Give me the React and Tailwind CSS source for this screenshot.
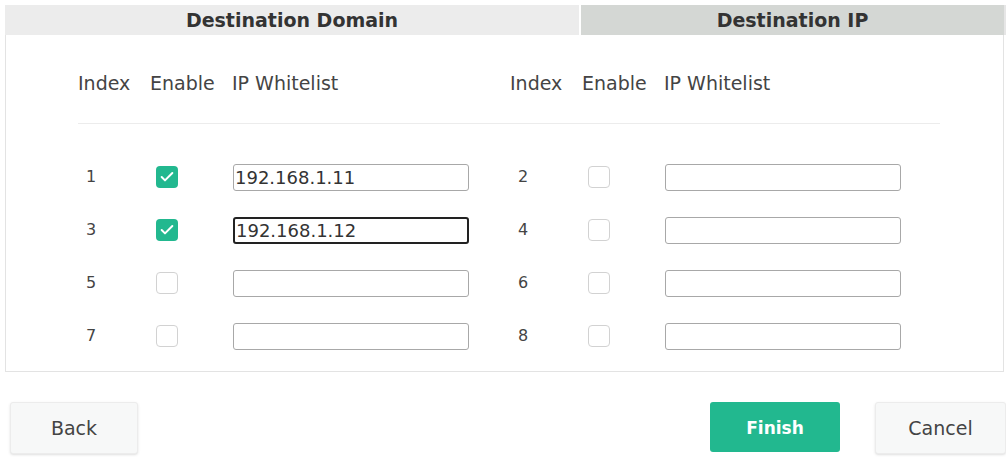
import { Check } from 'lucide-react';

const rows = [
  [
    { idx: 1, on: true, value: '192.168.1.11' },
    { idx: 2, on: false, value: '' },
  ],
  [
    { idx: 3, on: true, value: '192.168.1.12', focus: true },
    { idx: 4, on: false, value: '' },
  ],
  [
    { idx: 5, on: false, value: '' },
    { idx: 6, on: false, value: '' },
  ],
  [
    { idx: 7, on: false, value: '' },
    { idx: 8, on: false, value: '' },
  ],
];

function Box({ on }) {
  if (on) {
    return (
      <span className="flex h-[22px] w-[22px] items-center justify-center rounded-[4px] bg-[#22b88f]">
        <Check className="h-4 w-4 text-white" strokeWidth={3} />
      </span>
    );
  }
  return <span className="block h-[22px] w-[22px] rounded-[4px] border border-[#d2d2d2] bg-white" />;
}

function Cell({ idx, on, value, focus }) {
  return (
    <div className="flex w-[432px] items-center">
      <span className="w-[78px] pl-[8px] text-[16px] text-[#444]">{idx}</span>
      <span className="w-[77px]">
        <Box on={on} />
      </span>
      <input
        readOnly
        value={value}
        className={`h-[27px] w-[236px] rounded-[3px] bg-white px-[1px] text-[18px] leading-none text-[#333] outline-none ${
          focus ? 'border-2 border-[#222]' : 'border border-[#a8a8a8]'
        }`}
        style={{ fontFamily: '"DejaVu Sans", sans-serif' }}
      />
    </div>
  );
}

function HeadCell() {
  return (
    <div className="flex w-[432px] items-center text-[19px] text-[#444]">
      <span className="w-[72px]">Index</span>
      <span className="w-[82px]">Enable</span>
      <span>IP Whitelist</span>
    </div>
  );
}

export default function App() {
  return (
    <div
      className="h-[457px] w-[1006px] overflow-hidden bg-white"
      style={{ fontFamily: '"DejaVu Sans", sans-serif' }}
    >
      <div className="pl-[5px] pt-[5px]">
        <div className="flex h-[30px] text-[19px] font-bold text-[#333]">
          <div className="flex w-[574px] items-center justify-center bg-[#ececec]">Destination Domain</div>
          <div className="ml-[2px] flex flex-1 items-center justify-center border-r-2 border-[#e6e6e6] bg-[#d4d7d4]">
            Destination IP
          </div>
        </div>
        <div className="h-[337px] w-[999px] border border-t-0 border-[#e3e3e3]">
          <div className="pl-[72px] pt-[34px]">
            <div className="flex">
              <HeadCell />
              <HeadCell />
            </div>
            <div className="mt-[25px] h-px w-[862px] bg-[#ececec]" />
            <div className="mt-[40px] flex flex-col gap-[26px]">
              {rows.map((r, i) => (
                <div key={i} className="flex">
                  <Cell {...r[0]} />
                  <Cell {...r[1]} />
                </div>
              ))}
            </div>
          </div>
        </div>
      </div>
      <div className="mt-[30px] flex items-start pl-[10px] text-[19px]">
        <button className="h-[52px] w-[128px] rounded-[3px] border border-[#ececec] bg-[#f7f8f8] text-[#444] shadow-sm">
          Back
        </button>
        <div className="flex-1" />
        <button className="h-[50px] w-[130px] rounded-[3px] bg-[#22b88f] pt-[3px] text-[17px] font-bold text-white">
          Finish
        </button>
        <button className="ml-[35px] h-[52px] w-[131px] rounded-[3px] border border-[#ececec] bg-[#f7f8f8] text-[#444] shadow-sm">
          Cancel
        </button>
      </div>
    </div>
  );
}
